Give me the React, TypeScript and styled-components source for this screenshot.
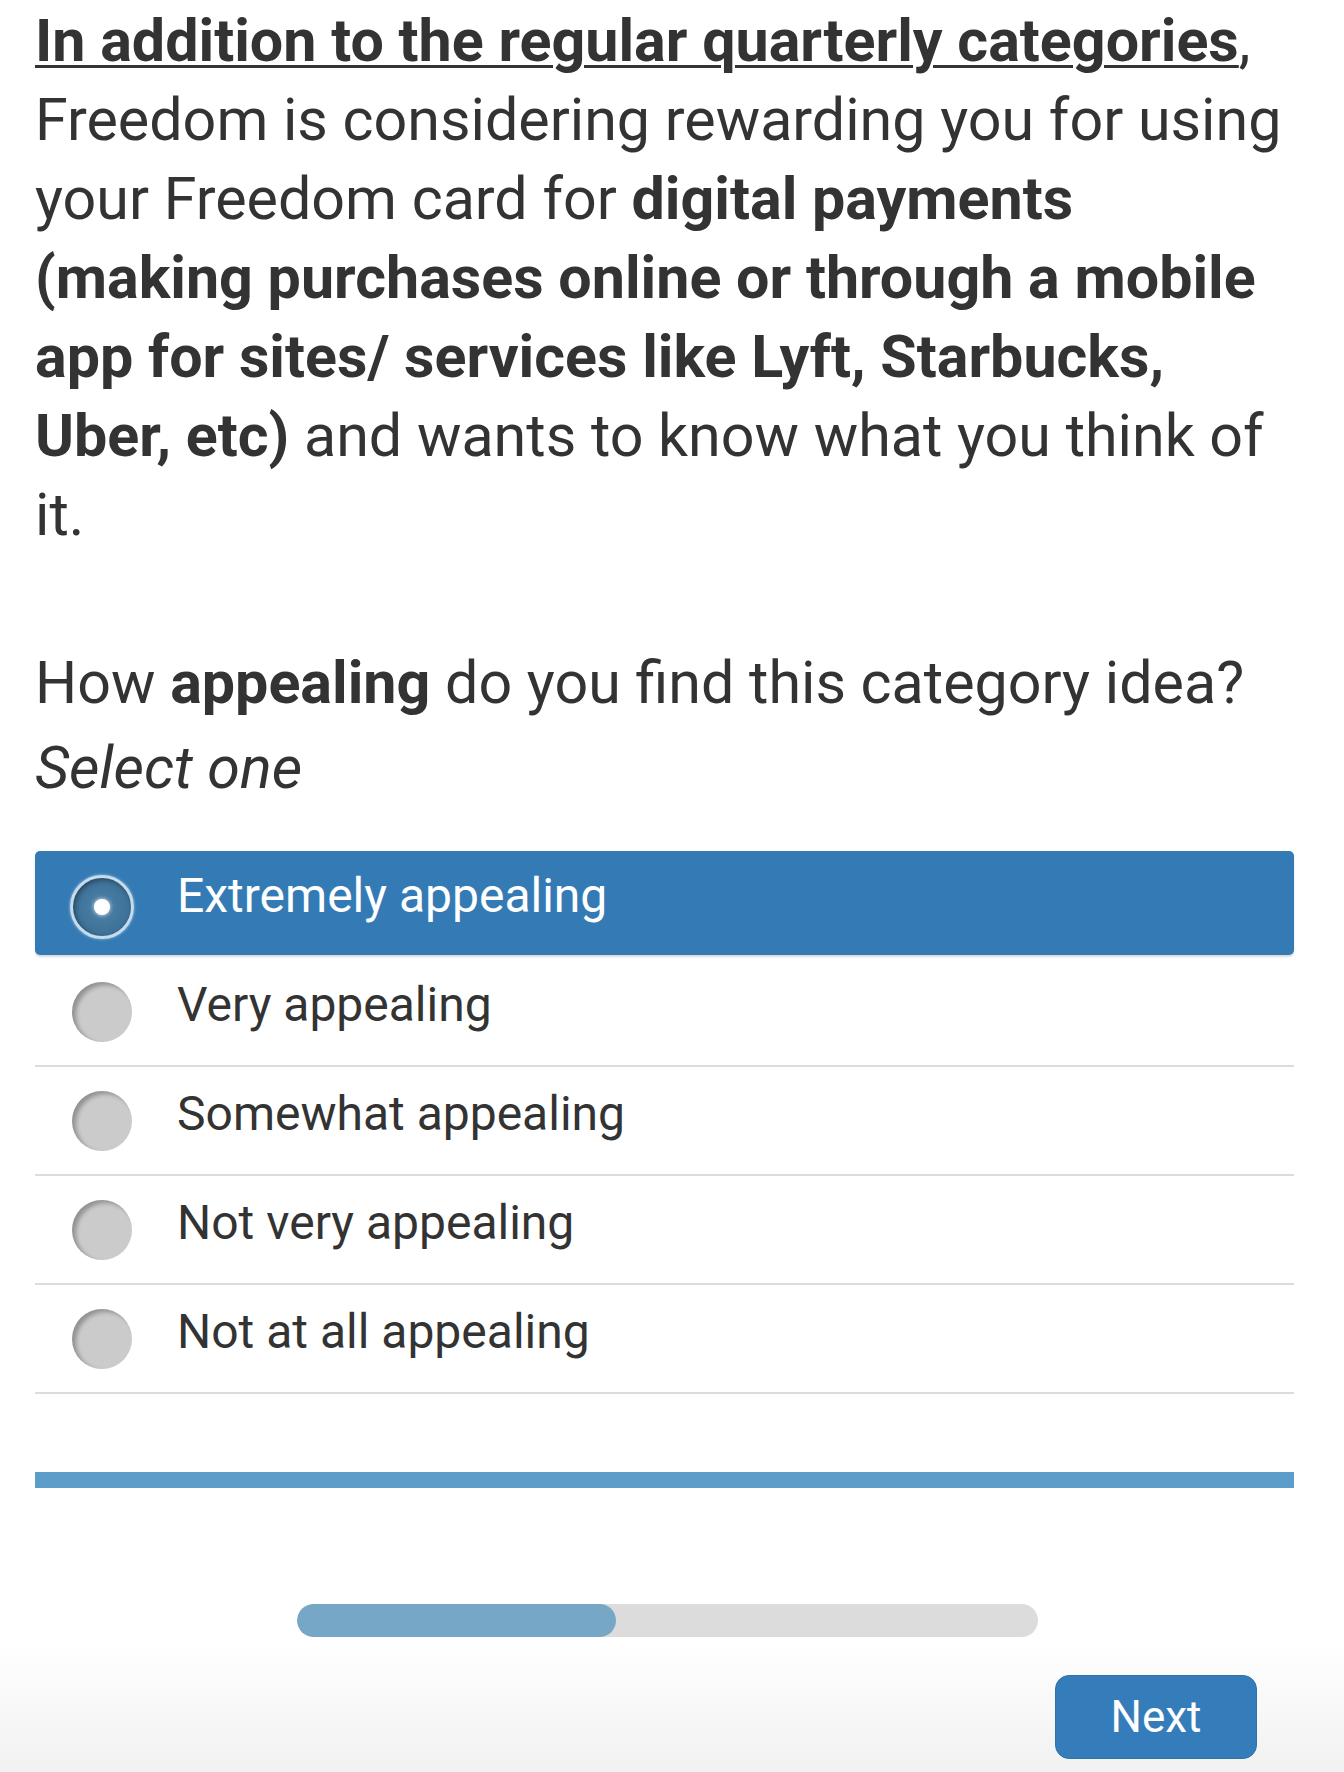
import styled, { createGlobalStyle } from 'styled-components'

const GlobalStyle = createGlobalStyle`
  html, body {
    margin: 0;
    padding: 0;
    background: #fff;
  }
  body {
    font-family: Roboto, "Liberation Sans", sans-serif;
    color: #333;
  }
`

const options = [
  'Extremely appealing',
  'Very appealing',
  'Somewhat appealing',
  'Not very appealing',
  'Not at all appealing',
]

const App = () => {
  const selected = 0
  const progress = 43

  return (
    <>
      <GlobalStyle />
      <Page>
        <Intro>
          <Lead>In addition to the regular quarterly categories</Lead>, Freedom is considering
          rewarding you for using your Freedom card for <b>digital payments (making purchases
          online or through a mobile app for sites/ services like Lyft, Starbucks, Uber, etc)</b>{' '}
          and wants to know what you think of it.
        </Intro>

        <Question>
          How <b>appealing</b> do you find this category idea?
        </Question>
        <Hint>Select one</Hint>

        <OptionList>
          {options.map((label, i) => (
            <Option key={label} $selected={i === selected}>
              <Radio $selected={i === selected} />
              <Label $selected={i === selected}>{label}</Label>
            </Option>
          ))}
        </OptionList>

        <Rule />
      </Page>

      <Footer>
        <ProgressTrack>
          <ProgressFill style={{ width: `${progress}%` }} />
        </ProgressTrack>
        <Actions>
          <NextButton>Next</NextButton>
        </Actions>
      </Footer>
    </>
  )
}

export default App

const Page = styled.div`
  padding: 1px 50px 0 35px;
`

const Intro = styled.p`
  margin: 0;
  font-size: 59.2px;
  line-height: 79px;
  b {
    font-weight: 700;
  }
`

const Lead = styled.span`
  font-weight: 700;
  text-decoration: underline;
  text-decoration-thickness: 3px;
  text-underline-offset: 4px;
`

const Question = styled.p`
  margin: 89px 0 0;
  font-size: 59.2px;
  line-height: 79px;
  b {
    font-weight: 700;
  }
`

const Hint = styled.p`
  margin: 6px 0 0;
  font-size: 59.2px;
  line-height: 79px;
  font-style: italic;
`

const OptionList = styled.div`
  margin-top: 44px;
  display: flex;
  flex-direction: column;
`

const Option = styled.div<{ $selected?: boolean }>`
  display: flex;
  align-items: center;
  box-sizing: border-box;
  ${(p) =>
    p.$selected
      ? `
    height: 104px;
    margin-bottom: 3px;
    background: #347bb6;
    border-radius: 5px;
    box-shadow: 0 2px 2px rgba(0, 0, 0, 0.15);
  `
      : `
    height: 109px;
    border-bottom: 2px solid #dcdcdc;
  `}
`

const Radio = styled.span<{ $selected?: boolean }>`
  position: relative;
  flex: none;
  border-radius: 50%;
  box-sizing: border-box;
  ${(p) =>
    p.$selected
      ? `
    width: 64px;
    height: 64px;
    margin: 8px 0 0 35px;
    border: 3px solid #c6dbec;
    background: radial-gradient(circle, #4d82aa 0%, #3f7399 60%, #34678c 100%);
    box-shadow: inset 2px 2px 5px rgba(0, 0, 0, 0.35), 0 0 3px rgba(255, 255, 255, 0.6);
    &::after {
      content: '';
      position: absolute;
      left: 50%;
      top: 50%;
      width: 16px;
      height: 16px;
      margin: -8px 0 0 -8px;
      border-radius: 50%;
      background: #fff;
      box-shadow: 0 0 4px rgba(255, 255, 255, 0.9);
    }
  `
      : `
    width: 60px;
    height: 60px;
    margin-left: 37px;
    background: #cbcbcb;
    box-shadow: inset 4px 3px 4px rgba(0, 0, 0, 0.28);
  `}
`

const Label = styled.span<{ $selected?: boolean }>`
  margin: 0 0 14px ${(p) => (p.$selected ? '43px' : '45px')};
  font-size: 48px;
  line-height: 60px;
  color: ${(p) => (p.$selected ? '#fff' : '#333')};
`

const Rule = styled.div`
  height: 16px;
  margin-top: 78px;
  background: #5c9ec9;
`

const Footer = styled.div`
  height: 284px;
  padding: 116px 50px 0 35px;
  box-sizing: border-box;
  background: linear-gradient(#fff 0%, #fff 55%, #f1f1f1 100%);
`

const ProgressTrack = styled.div`
  width: 741px;
  height: 33px;
  margin-left: 262px;
  border-radius: 17px;
  background: #dcdcdc;
  overflow: hidden;
`

const ProgressFill = styled.div`
  height: 100%;
  border-radius: 17px;
  background: #77a7c6;
`

const Actions = styled.div`
  display: flex;
  justify-content: flex-end;
  margin-top: 38px;
  padding-right: 37px;
`

const NextButton = styled.button`
  width: 202px;
  height: 84px;
  border: 1px solid #2f72aa;
  border-radius: 14px;
  background: #357dba;
  color: #fff;
  font-family: Roboto, "Liberation Sans", sans-serif;
  font-size: 44px;
  cursor: pointer;
`
